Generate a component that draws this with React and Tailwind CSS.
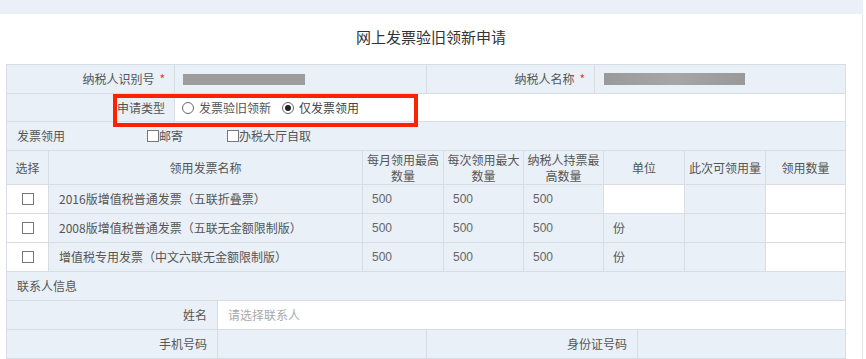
import React from 'react';

const font = { fontFamily: '"Noto Sans CJK SC", "Liberation Sans", sans-serif' };

const Radio = ({ checked }) => (
  <span className="inline-flex h-[12px] w-[12px] items-center justify-center rounded-full border border-[#666] bg-white">
    {checked && <span className="h-[6px] w-[6px] rounded-full bg-[#222]" />}
  </span>
);

const Box = () => <span className="inline-block h-[12px] w-[12px] border border-[#777] bg-white" />;

const cell = 'border-r border-b border-[#d9dde2] flex items-center';

const invoices = [
  { name: '2016版增值税普通发票（五联折叠票）', unit: '' },
  { name: '2008版增值税普通发票（五联无金额限制版）', unit: '份' },
  { name: '增值税专用发票（中文六联无金额限制版）', unit: '份' },
];

export default function App() {
  return (
    <div className="relative h-[359px] w-[866px] overflow-hidden bg-white text-[12px] text-[#555]" style={font}>
      {/* top band */}
      <div className="h-[14px] w-[863px] bg-[#e9f0f7]" />

      <div className="w-[863px] border-r border-[#e6e6e6] pb-10">
        <h1 className="pt-[13px] text-center text-[15px] leading-[20px] text-[#333]">网上发票验旧领新申请</h1>

        <div className="ml-[6px] mt-[17px] w-[840px] border-l border-t border-[#d9dde2]">
          {/* 纳税人 */}
          <div className="flex h-[29px]">
            <div className={`${cell} w-[168px] justify-end bg-[#e9f0f7] pr-[9px]`}>
              纳税人识别号<span className="ml-[5px] text-[#e33]">*</span>
            </div>
            <div className={`${cell} w-[252px] bg-[#e9f0f7] pl-[8px]`}>
              <span className="h-[11px] w-[122px] bg-[#9d9d9d]" />
            </div>
            <div className={`${cell} w-[168px] justify-end bg-[#e9f0f7] pr-[9px]`}>
              纳税人名称<span className="ml-[5px] text-[#e33]">*</span>
            </div>
            <div className={`${cell} w-[251px] bg-[#e9f0f7] pl-[9px]`}>
              <span className="h-[12px] w-[141px] bg-gradient-to-r from-[#9a9a9a] via-[#a6a6a6] to-[#999]" />
            </div>
          </div>

          {/* 申请类型 */}
          <div className="flex h-[28px]">
            <div className={`${cell} w-[168px] justify-end bg-[#e9f0f7] pr-[9px]`}>申请类型</div>
            <div className={`${cell} w-[671px] gap-[5px] bg-white pl-[7px]`}>
              <Radio />
              <span>发票验旧领新</span>
              <span className="ml-[1px]" />
              <Radio checked />
              <span className="text-[#444]">仅发票领用</span>
            </div>
          </div>

          {/* 发票领用 */}
          <div className={`${cell} h-[29px] w-[839px] bg-[#e9f0f7] pl-[10px]`}>
            <span>发票领用</span>
            <span className="ml-[82px] flex items-center">
              <Box />
              邮寄
            </span>
            <span className="ml-[44px] flex items-center">
              <Box />
              办税大厅自取
            </span>
          </div>

          {/* header */}
          <div className="flex h-[34px] bg-[#e9f0f7] text-center leading-[16px]">
            <div className={`${cell} w-[42px] justify-center`}>选择</div>
            <div className={`${cell} w-[314px] justify-center`}>领用发票名称</div>
            <div className={`${cell} w-[81px] justify-center`}>每月领用最高<br />数量</div>
            <div className={`${cell} w-[80px] justify-center`}>每次领用最大<br />数量</div>
            <div className={`${cell} w-[80px] justify-center`}>纳税人持票最<br />高数量</div>
            <div className={`${cell} w-[81px] justify-center`}>单位</div>
            <div className={`${cell} w-[81px] justify-center`}>此次可领用量</div>
            <div className={`${cell} w-[80px] justify-center`}>领用数量</div>
          </div>

          {invoices.map((inv, i) => (
            <div key={i} className="flex h-[29px]">
              <div className={`${cell} w-[42px] justify-center bg-white`}><Box /></div>
              <div className={`${cell} w-[314px] bg-[#e9f0f7] pl-[10px]`}>{inv.name}</div>
              <div className={`${cell} w-[81px] bg-[#e9f0f7] pl-[9px] text-[#666]`} style={{ fontFamily: '"Liberation Sans", sans-serif' }}>500</div>
              <div className={`${cell} w-[80px] bg-[#e9f0f7] pl-[9px] text-[#666]`} style={{ fontFamily: '"Liberation Sans", sans-serif' }}>500</div>
              <div className={`${cell} w-[80px] bg-[#e9f0f7] pl-[9px] text-[#666]`} style={{ fontFamily: '"Liberation Sans", sans-serif' }}>500</div>
              <div className={`${cell} w-[81px] pl-[9px] ${inv.unit ? 'bg-[#e9f0f7]' : 'bg-white'}`}>{inv.unit}</div>
              <div className={`${cell} w-[81px] bg-[#e9f0f7]`} />
              <div className={`${cell} w-[80px] bg-white`} />
            </div>
          ))}

          {/* 联系人信息 */}
          <div className={`${cell} h-[29px] w-[839px] bg-[#e9f0f7] pl-[10px]`}>联系人信息</div>

          <div className="flex h-[29px]">
            <div className={`${cell} w-[211px] justify-end bg-[#e9f0f7] pr-[10px]`}>姓名</div>
            <div className={`${cell} w-[628px] bg-white pl-[10px] text-[#aaa]`}>请选择联系人</div>
          </div>

          <div className="flex h-[29px]">
            <div className={`${cell} w-[211px] justify-end bg-[#e9f0f7] pr-[10px]`}>手机号码</div>
            <div className={`${cell} w-[209px] bg-[#e9f0f7]`} />
            <div className={`${cell} w-[211px] justify-end bg-[#e9f0f7] pr-[10px]`}>身份证号码</div>
            <div className={`${cell} w-[208px] bg-[#e9f0f7]`} />
          </div>
        </div>
      </div>

      {/* red annotation box */}
      <div className="absolute left-[113px] top-[94px] h-[33px] w-[305px] border-[4px] border-[#ff2200]" />
    </div>
  );
}
